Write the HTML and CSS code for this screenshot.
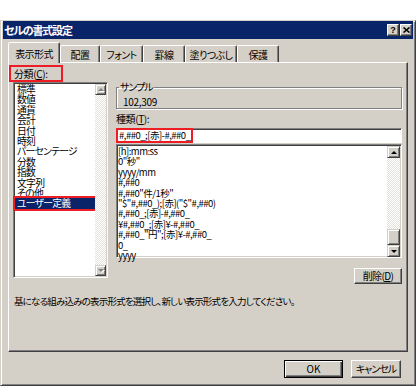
FILE: index.html
```html
<!DOCTYPE html>
<html lang="ja">
<head>
  <meta charset="UTF-8" />
  <title>セルの書式設定</title>
  <link rel="stylesheet" href="styles.css">
</head>
<body>
  <div class="dialog">
    <div class="titlebar">
      <span class="title">セルの書式設定</span>
      <span class="cap-btns">
        <span class="cap-btn">?</span>
        <span class="cap-btn">
          <svg width="7" height="6" viewBox="0 0 7 6"><path d="M0.5 0.5 L6.5 5.5 M6.5 0.5 L0.5 5.5" stroke="#000" stroke-width="1.6"/></svg>
        </span>
      </span>
    </div>

    <div class="tabs">
      <div class="tab active">表示形式</div>
      <div class="tab">配置</div>
      <div class="tab">フォント</div>
      <div class="tab">罫線</div>
      <div class="tab">塗りつぶし</div>
      <div class="tab">保護</div>
    </div>

    <div class="panel">
      <div class="panel-body">
        <div class="cat-col">
          <div class="cat-label hl">分類(<u>C</u>):</div>
          <div class="listbox cat-list">
            <ul class="items">
              <li>標準</li>
              <li>数値</li>
              <li>通貨</li>
              <li>会計</li>
              <li>日付</li>
              <li>時刻</li>
              <li>パーセンテージ</li>
              <li>分数</li>
              <li>指数</li>
              <li>文字列</li>
              <li>その他</li>
              <li class="selected">ユーザー定義</li>
            </ul>
            <div class="vscroll">
              <div class="sb-btn disabled"><span class="arrow up"></span></div>
              <div class="sb-track"></div>
              <div class="sb-btn disabled"><span class="arrow down"></span></div>
            </div>
          </div>
        </div>

        <div class="fmt-col">
          <fieldset class="sample">
            <legend>サンプル</legend>
            <div class="sample-val">102,309</div>
          </fieldset>
          <div class="fmt-label">種類(<u>T</u>):</div>
          <div class="fmt-input"><span class="hl">#,##0_;[赤]-#,##0_</span></div>
          <div class="listbox fmt-list">
            <ul class="items">
              <li>[h]:mm:ss</li>
              <li>0"秒"</li>
              <li>yyyy/mm</li>
              <li>#,##0</li>
              <li>#,##0"件/1秒"</li>
              <li>"$"#,##0_);[赤]("$"#,##0)</li>
              <li>#,##0_;[赤]-#,##0_</li>
              <li>¥#,##0_;[赤]¥-#,##0_</li>
              <li>#,##0_"円";[赤]¥-#,##0_</li>
              <li>0_</li>
              <li>yyyy</li>
            </ul>
            <div class="vscroll">
              <div class="sb-btn"><span class="arrow up"></span></div>
              <div class="sb-track"><div class="sb-thumb"></div></div>
              <div class="sb-btn"><span class="arrow down"></span></div>
            </div>
          </div>
          <div class="del-row">
            <button class="btn del-btn">削除(<u>D</u>)</button>
          </div>
        </div>
      </div>
      <p class="desc">基になる組み込みの表示形式を選択し、新しい表示形式を入力してください。</p>
    </div>

    <div class="footer">
      <button class="btn ok-btn default">OK</button>
      <button class="btn cancel-btn">キャンセル</button>
    </div>
  </div>
</body>
</html>
```

FILE: styles.css
```css
/* Windows classic dialog */
* {
  box-sizing: border-box;
}
body {
  margin: 0;
  background: #fff;
  font-family: "Noto Sans CJK JP", "Noto Sans", sans-serif;
  font-size: 10px;
  font-feature-settings: "palt";
  color: #000;
}
.dialog {
  margin-top: 20px;
  height: 366px;
  background: #d4d0c8;
  border: 1px solid;
  border-color: #d4d0c8 #404040 #404040 #d4d0c8;
  box-shadow: inset 1px 1px #fff, inset -1px -1px #808080;
  padding: 0 2px;
  display: flex;
  flex-direction: column;
}
.titlebar {
  height: 18px;
  background: #0a246a;
  color: #fff;
  display: flex;
  align-items: center;
  justify-content: space-between;
  padding: 0 1px;
}
.title {
  font-weight: bold;
  font-size: 11px;
  letter-spacing: -1.2px;
}
.cap-btns {
  display: flex;
  gap: 1px;
}
.cap-btn {
  width: 12px;
  height: 12px;
  background: #d4d0c8;
  border: 1px solid;
  border-color: #fff #404040 #404040 #fff;
  box-shadow: inset -1px -1px #808080;
  display: flex;
  align-items: center;
  justify-content: center;
  color: #000;
  font-family: "Liberation Sans", sans-serif;
  font-weight: bold;
  font-size: 9px;
  line-height: 10px;
}

/* tabs */
.tabs {
  display: flex;
  align-items: flex-end;
  height: 20px;
  margin-top: 3px;
  padding-left: 5px;
  position: relative;
  z-index: 1;
}
.tab {
  height: 17px;
  border: 1px solid;
  border-bottom: none;
  border-color: #fff #404040 transparent #fff;
  box-shadow: inset -1px 0 #808080;
  border-radius: 2px 2px 0 0;
  display: flex;
  align-items: center;
  justify-content: center;
  background: #d4d0c8;
  letter-spacing: -0.6px;
}
.tab.active {
  height: 21px;
  margin-bottom: -1px;
}
.tab:nth-child(1) { width: 52px; }
.tab:nth-child(2) { width: 40px; }
.tab:nth-child(3) { width: 43px; }
.tab:nth-child(4) { width: 42px; }
.tab:nth-child(5) { width: 52px; }
.tab:nth-child(6) { width: 42px; }

/* panel */
.panel {
  margin: 0 5px;
  height: 290px;
  border: 1px solid;
  border-color: #fff #404040 #404040 #fff;
  box-shadow: inset -1px -1px #808080;
  padding: 2px 5px 0 4px;
}
.panel-body {
  display: grid;
  grid-template-columns: 95px 1fr;
  column-gap: 8px;
}
.hl {
  border: 2px solid #ee1c24;
}
.cat-label {
  width: 54px;
  height: 17px;
  margin-left: -4px;
  padding-left: 3px;
  line-height: 13px;
  letter-spacing: -0.4px;
}
.listbox {
  display: flex;
  background: #fff;
  border: 1px solid;
  border-color: #808080 #fff #fff #808080;
  box-shadow: inset 1px 1px #404040, inset -1px -1px #d4d0c8;
  padding: 1px;
}
.items {
  flex: 1;
  min-width: 0;
  list-style: none;
  margin: 0;
  padding: 0;
  line-height: 10.4px;
  white-space: nowrap;
}
.cat-list {
  height: 196px;
}
.cat-list .items {
  font-size: 9.8px;
  letter-spacing: -0.7px;
}
.cat-list li {
  padding-left: 2px;
}
.cat-list li.selected {
  background: #0a246a;
  color: #fff;
  outline: 2px solid #ee1c24;
}

/* scrollbars */
.vscroll {
  width: 11px;
  flex: none;
  display: flex;
  flex-direction: column;
  background: repeating-conic-gradient(#fff 0 25%, #e4e2dc 0 50%) 0 0 / 2px 2px;
}
.sb-btn, .sb-thumb {
  height: 11px;
  background: #d4d0c8;
  border: 1px solid;
  border-color: #d4d0c8 #404040 #404040 #d4d0c8;
  box-shadow: inset 1px 1px #fff, inset -1px -1px #808080;
  display: flex;
  align-items: center;
  justify-content: center;
}
.sb-track {
  flex: 1;
  display: flex;
  flex-direction: column;
  justify-content: flex-end;
}
.arrow {
  width: 0;
  height: 0;
  border-left: 3px solid transparent;
  border-right: 3px solid transparent;
}
.arrow.up {
  border-bottom: 3px solid #000;
}
.arrow.down {
  border-top: 3px solid #000;
}
.disabled .arrow.up {
  border-bottom-color: #808080;
  filter: drop-shadow(1px 1px 0 #fff);
}
.disabled .arrow.down {
  border-top-color: #808080;
  filter: drop-shadow(1px 1px 0 #fff);
}
.fmt-list .vscroll {
  width: 13px;
}
.fmt-list .sb-btn {
  height: 12px;
}
.sb-thumb {
  height: 16px;
}

/* right column */
.sample {
  margin: 16px 0 0;
  padding: 3px 6px 0 6px;
  border: 1px solid #808080;
  box-shadow: inset 1px 1px #fff, 1px 1px #fff;
}
.sample legend {
  margin-left: -4px;
  padding: 0 1px;
  line-height: 12px;
  letter-spacing: -1px;
}
.sample-val {
  line-height: 12px;
  letter-spacing: -0.3px;
}
.fmt-label {
  margin-top: 4px;
  line-height: 12px;
  letter-spacing: -0.4px;
}
.fmt-input {
  margin-top: 3px;
  height: 15px;
  background: #fff;
  border: 1px solid;
  border-color: #808080 #fff #fff #808080;
  box-shadow: inset 1px 1px #404040;
  display: flex;
}
.fmt-input .hl {
  display: block;
  height: 15px;
  margin: -1px 0 -1px -1px;
  padding: 0 1px;
  line-height: 10px;
  font-size: 9.5px;
  letter-spacing: -0.5px;
}
.fmt-list {
  margin-top: 1px;
  height: 114px;
  padding-bottom: 0;
}
.fmt-list .items {
  font-size: 9.5px;
  letter-spacing: -0.5px;
}
.del-row {
  display: flex;
  justify-content: flex-end;
  margin-top: 10px;
}

/* buttons */
.btn {
  height: 18px;
  padding: 0;
  background: #d4d0c8;
  border: 1px solid;
  border-color: #fff #404040 #404040 #fff;
  box-shadow: inset -1px -1px #808080;
  font: inherit;
  color: #000;
  line-height: 14px;
  letter-spacing: -0.6px;
}
.btn.default {
  border-color: #000;
  box-shadow: inset 1px 1px #fff, inset -1px -1px #404040, inset -2px -2px #808080;
}
.del-btn {
  width: 48px;
  height: 16px;
  line-height: 12px;
}
.ok-btn {
  width: 59px;
  letter-spacing: 0;
}
.cancel-btn {
  width: 50px;
  letter-spacing: -1px;
}
.desc {
  margin: 11px 0 0 1px;
  line-height: 12px;
  font-size: 9.5px;
  letter-spacing: -0.8px;
}
.footer {
  display: flex;
  justify-content: flex-end;
  gap: 8px;
  padding: 8px 12px 0 0;
}
```
